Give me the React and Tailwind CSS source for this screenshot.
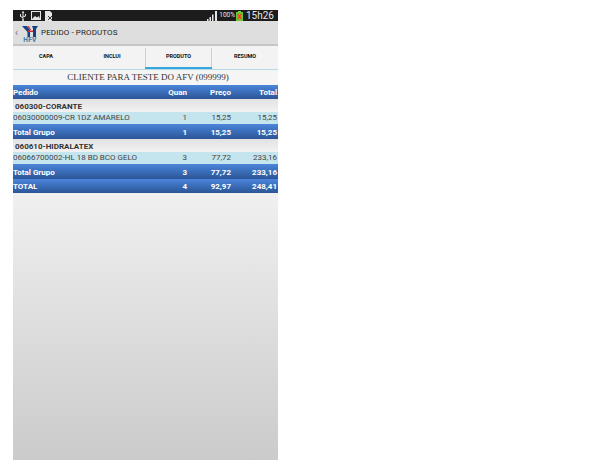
import React from 'react';

const blueRow = "bg-gradient-to-b from-[#4a86dc] to-[#2c5596] text-white font-bold";

const StatusIcons = () => (
  <div className="flex items-center gap-[4px] pl-[6px]">
    <svg width="8" height="10" viewBox="0 0 8 10" fill="#e6e6e6">
      <path d="M3.5 0h1v8h-1zM2.7 2L4 0l1.3 2zM1 3h1v2l2 1.5v1L1 5.5zM7 3H6v1.5L4 6v1l3-2z" />
      <circle cx="4" cy="9" r="1" />
    </svg>
    <svg width="10" height="9" viewBox="0 0 10 9">
      <rect x="0.5" y="0.5" width="9" height="8" fill="#222" stroke="#e6e6e6" />
      <path d="M1 8l3-3 2 1.5L8 5l1 3z" fill="#e6e6e6" />
    </svg>
    <svg width="9" height="10" viewBox="0 0 9 10">
      <path d="M0 0h5l2 2v8H0z" fill="#e6e6e6" />
      <path d="M3 5l4 4M7 5L3 9" stroke="#333" strokeWidth="1" />
    </svg>
  </div>
);

const StatusRight = () => (
  <div className="flex items-center pr-[4px]">
    <svg width="11" height="10" viewBox="0 0 11 10" fill="#e6e6e6">
      <rect x="0" y="8" width="1.5" height="2" />
      <rect x="2.5" y="6" width="1.5" height="4" />
      <rect x="5" y="3.5" width="1.5" height="6.5" />
      <rect x="8" y="0" width="2" height="10" />
    </svg>
    <span className="text-[6.5px] leading-none text-[#e6e6e6] ml-[1px]">100%</span>
    <svg width="7" height="10" viewBox="0 0 7 10" className="ml-[1px]">
      <rect x="2" y="0" width="3" height="1" fill="#7fd03a" />
      <rect x="0" y="1" width="7" height="9" fill="#6cc832" />
      <path d="M1.5 3l4 5M5.5 3l-4 5" stroke="#e2502c" strokeWidth="1.6" />
    </svg>
    <span className="text-[10px] leading-none text-[#e6e6e6] ml-[3px]">15h26</span>
  </div>
);

const Logo = () => (
  <div className="flex flex-col items-center w-[16px] ml-[2px] mr-[1px] mt-[3px]">
    <svg width="16" height="11" viewBox="0 0 16 11" className="block">
      <path d="M0 0h5l3 4.5V11H5.5V6z" fill="#16407f" />
      <path d="M5.5 0H7l2 4H7.5z" fill="#c8333a" />
      <path d="M6 4.5h6V6H6z" fill="#c8333a" />
      <path d="M10 0h6l-2 3v8h-3V2.5z" fill="#16407f" />
    </svg>
    <span className="text-[6.5px] leading-[6px] font-bold text-[#2f7fa8] tracking-[0.3px]">HFV</span>
  </div>
);

const Tab = ({ label, active, width }) => (
  <div className={`relative flex items-center justify-center h-full ${width}`}>
    <span className="text-[5.5px] font-bold text-[#111] pb-[2px]">{label}</span>
    {active && <div className="absolute left-0 right-0 bottom-0 h-[2px] bg-[#35a7dc]" />}
    {active && <div className="absolute left-0 top-[2px] bottom-[2px] w-px bg-[#cfcfcf]" />}
    {active && <div className="absolute right-0 top-[2px] bottom-[2px] w-px bg-[#cfcfcf]" />}
  </div>
);

const Cols = ({ a, b, c, d, className }) => (
  <div className={`flex items-center text-[8px] ${className}`}>
    <div className="flex-1 truncate">{a}</div>
    <div className="w-[26px] text-right">{b}</div>
    <div className="w-[44px] text-right">{c}</div>
    <div className="w-[47px] text-right pr-[1px]">{d}</div>
  </div>
);

const groups = [
  {
    name: '060300-CORANTE',
    item: ['06030000009-CR 1DZ AMARELO', '1', '15,25', '15,25'],
    total: ['1', '15,25', '15,25'],
  },
  {
    name: '060610-HIDRALATEX',
    item: ['06066700002-HL 18 BD BCO GELO', '3', '77,72', '233,16'],
    total: ['3', '77,72', '233,16'],
  },
];

export default function App() {
  return (
    <div className="bg-white w-[608px] h-[467px] pt-[10px] pl-[13px] font-['Roboto',sans-serif]">
      <div className="w-[265px] h-[450px] flex flex-col">
        <div className="h-[11px] bg-[#1c1c1c] flex items-center justify-between">
          <StatusIcons />
          <StatusRight />
        </div>

        <div className="h-[25px] bg-[#dedede] border-b-2 border-[#c6c6c6] flex items-center pl-[2px]">
          <span className="text-[10px] text-[#777] leading-none mr-[2px]">‹</span>
          <Logo />
          <span className="text-[8px] text-[#222] ml-[2px] tracking-[0.1px]">PEDIDO - PRODUTOS</span>
        </div>

        <div className="h-[24px] flex bg-[#f3f3f3] border-b border-[#b5d9e6]">
          <Tab label="CAPA" width="w-[66px]" />
          <Tab label="INCLUI" width="w-[66px]" />
          <Tab label="PRODUTO" active width="w-[67px]" />
          <Tab label="RESUMO" width="w-[66px]" />
        </div>

        <div className="h-[15px] bg-[#f5f5f5] flex items-center justify-center pl-[5px] font-['Liberation_Serif',serif] text-[9px] text-[#333]">
          CLIENTE PARA TESTE DO AFV (099999)
        </div>

        <Cols a="Pedido" b="Quan" c="Preço" d="Total" className={`h-[14px] pt-px ${blueRow}`} />

        {groups.map((g) => (
          <div key={g.name}>
            <div className="h-[13px] pl-[2px] pt-[2px] flex items-center text-[8px] font-bold text-[#333] bg-gradient-to-b from-[#e2e2e2] to-[#f2f2f2]">
              {g.name}
            </div>
            <Cols
              a={g.item[0]}
              b={g.item[1]}
              c={g.item[2]}
              d={g.item[3]}
              className="h-[12px] bg-[#c4e4ee] text-[#444]"
            />
            <Cols
              a="Total Grupo"
              b={g.total[0]}
              c={g.total[1]}
              d={g.total[2]}
              className={`h-[15px] pt-[2px] ${blueRow}`}
            />
          </div>
        ))}

        <Cols a="TOTAL" b="4" c="92,97" d="248,41" className={`h-[14px] pt-px ${blueRow}`} />

        <div className="flex-1 bg-gradient-to-b from-[#f0f0f0] to-[#cbcbcb]" />
      </div>
    </div>
  );
}
